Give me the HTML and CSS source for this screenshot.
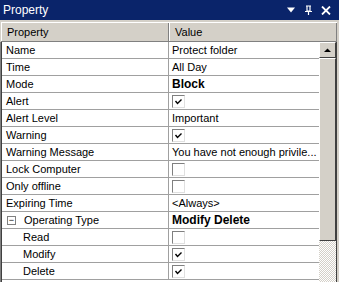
FILE: index.html
```html
<!DOCTYPE html>
<html>
<head>
<meta charset="utf-8">
<link rel="stylesheet" href="styles.css">
</head>
<body>
<div class="panel">
  <div class="title">
    <span class="title-text">Property</span>
    <span class="title-icons">
      <svg width="10" height="6" viewBox="0 0 10 6"><path d="M1 0.5 H9 L5 5.5 Z" fill="#fff"/></svg>
      <svg width="9" height="10" viewBox="0 0 9 10"><path d="M2 1 H7 M3 1 V6 M6 1 V6 M2.5 6 H6.5 M1 6.5 H8 M4.5 6.5 V10" stroke="#fff" stroke-width="1.2" fill="none"/></svg>
      <svg width="10" height="9" viewBox="0 0 10 9"><path d="M1 0.5 L9 8.5 M9 0.5 L1 8.5" stroke="#fff" stroke-width="1.8"/></svg>
    </span>
  </div>
  <div class="gap"></div>
  <div class="header">
    <div class="hcell">Property</div>
    <div class="hcell">Value</div>
  </div>
  <div class="body">
    <div class="grid">
      <div class="row"><div class="k">Name</div><div class="v">Protect folder</div></div>
      <div class="row"><div class="k">Time</div><div class="v">All Day</div></div>
      <div class="row"><div class="k">Mode</div><div class="v b">Block</div></div>
      <div class="row"><div class="k">Alert</div><div class="v"><span class="cb"><svg class="tick" width="11" height="11" viewBox="0 0 11 11"><path d="M2.5 5 L4.5 7.5 L8.5 3.5" stroke="#000" stroke-width="1.4" fill="none"/></svg></span></div></div>
      <div class="row"><div class="k">Alert Level</div><div class="v">Important</div></div>
      <div class="row"><div class="k">Warning</div><div class="v"><span class="cb"><svg class="tick" width="11" height="11" viewBox="0 0 11 11"><path d="M2.5 5 L4.5 7.5 L8.5 3.5" stroke="#000" stroke-width="1.4" fill="none"/></svg></span></div></div>
      <div class="row"><div class="k">Warning Message</div><div class="v">You have not enough privile...</div></div>
      <div class="row"><div class="k">Lock Computer</div><div class="v"><span class="cb"></span></div></div>
      <div class="row"><div class="k">Only offline</div><div class="v"><span class="cb"></span></div></div>
      <div class="row"><div class="k">Expiring Time</div><div class="v">&lt;Always&gt;</div></div>
      <div class="row"><div class="k"><span class="exp">−</span>Operating Type</div><div class="v b">Modify Delete</div></div>
      <div class="row"><div class="k sub">Read</div><div class="v"><span class="cb"></span></div></div>
      <div class="row"><div class="k sub">Modify</div><div class="v"><span class="cb"><svg class="tick" width="11" height="11" viewBox="0 0 11 11"><path d="M2.5 5 L4.5 7.5 L8.5 3.5" stroke="#000" stroke-width="1.4" fill="none"/></svg></span></div></div>
      <div class="row"><div class="k sub">Delete</div><div class="v"><span class="cb"><svg class="tick" width="11" height="11" viewBox="0 0 11 11"><path d="M2.5 5 L4.5 7.5 L8.5 3.5" stroke="#000" stroke-width="1.4" fill="none"/></svg></span></div></div>
    </div>
    <div class="scroll">
      <div class="sbtn"><svg width="7" height="4" viewBox="0 0 7 4"><path d="M0 4 H7 L3.5 0.5 Z" fill="#000"/></svg></div>
      <div class="thumb"></div>
      <div class="track"></div>
    </div>
  </div>
</div>
</body>
</html>
```

FILE: styles.css
```css
html, body {
  margin: 0;
  padding: 0;
  background: #d4d0c8;
}
.panel {
  width: 339px;
  height: 282px;
  overflow: hidden;
  font-family: "Liberation Sans", Arial, sans-serif;
  font-size: 11px;
  color: #000;
  background: #d4d0c8;
}
.title {
  height: 20px;
  background: #0a246a;
  color: #fff;
  display: flex;
  align-items: center;
  justify-content: space-between;
  padding: 0 8px 0 3px;
}
.title-text {
  font-size: 12px;
}
.title-icons {
  display: flex;
  align-items: center;
  gap: 8px;
}
.gap {
  height: 2px;
}
.header {
  display: grid;
  grid-template-columns: 168px 1fr;
  height: 20px;
  margin-left: 1px;
  margin-right: 2px;
  border-top: 1px solid #fff;
  border-bottom: 1px solid #808080;
  box-sizing: border-box;
}
.hcell {
  display: flex;
  align-items: center;
  padding-left: 5px;
  border-left: 1px solid #fff;
  border-right: 1px solid #808080;
  background: #d4d0c8;
}
.body {
  display: flex;
  height: 240px;
  border-left: 1px solid #808080;
  margin-right: 2px;
  box-sizing: border-box;
}
.grid {
  width: 318px;
  background: #fff;
  border-left: 1px solid #404040;
}
.row {
  display: grid;
  grid-template-columns: 167px 1fr;
  height: 17px;
  border-bottom: 1px solid #a0a0a0;
  box-sizing: border-box;
}
.k {
  display: flex;
  align-items: center;
  padding-left: 4px;
  border-right: 1px solid #a0a0a0;
  white-space: nowrap;
}
.k.sub {
  padding-left: 21px;
}
.v {
  display: flex;
  align-items: center;
  padding-left: 3px;
  white-space: nowrap;
}
.v.b {
  font-weight: bold;
  font-size: 12px;
}
.exp {
  width: 7px;
  height: 7px;
  border: 1px solid #808080;
  font-size: 9px;
  line-height: 6px;
  text-align: center;
  margin-right: 8px;
  margin-left: 1px;
}
.cb {
  display: block;
  width: 11px;
  height: 11px;
  border-top: 1px solid #808080;
  border-left: 1px solid #808080;
  border-right: 1px solid #e0e0e0;
  border-bottom: 1px solid #e0e0e0;
  background: #fff;
}
.tick {
  display: block;
}
.scroll {
  width: 17px;
  display: flex;
  flex-direction: column;
  border-right: 1px solid #404040;
}
.sbtn, .thumb {
  background: #d4d0c8;
  border-top: 1px solid #fff;
  border-left: 1px solid #fff;
  border-right: 1px solid #404040;
  border-bottom: 1px solid #404040;
  box-sizing: border-box;
}
.sbtn {
  height: 16px;
  display: flex;
  align-items: center;
  justify-content: center;
}
.thumb {
  height: 183px;
}
.track {
  flex: 1;
  background-color: #fff;
  background-image: conic-gradient(#d4d0c8 25%, #fff 0 50%, #d4d0c8 0 75%, #fff 0);
  background-size: 2px 2px;
}
```
